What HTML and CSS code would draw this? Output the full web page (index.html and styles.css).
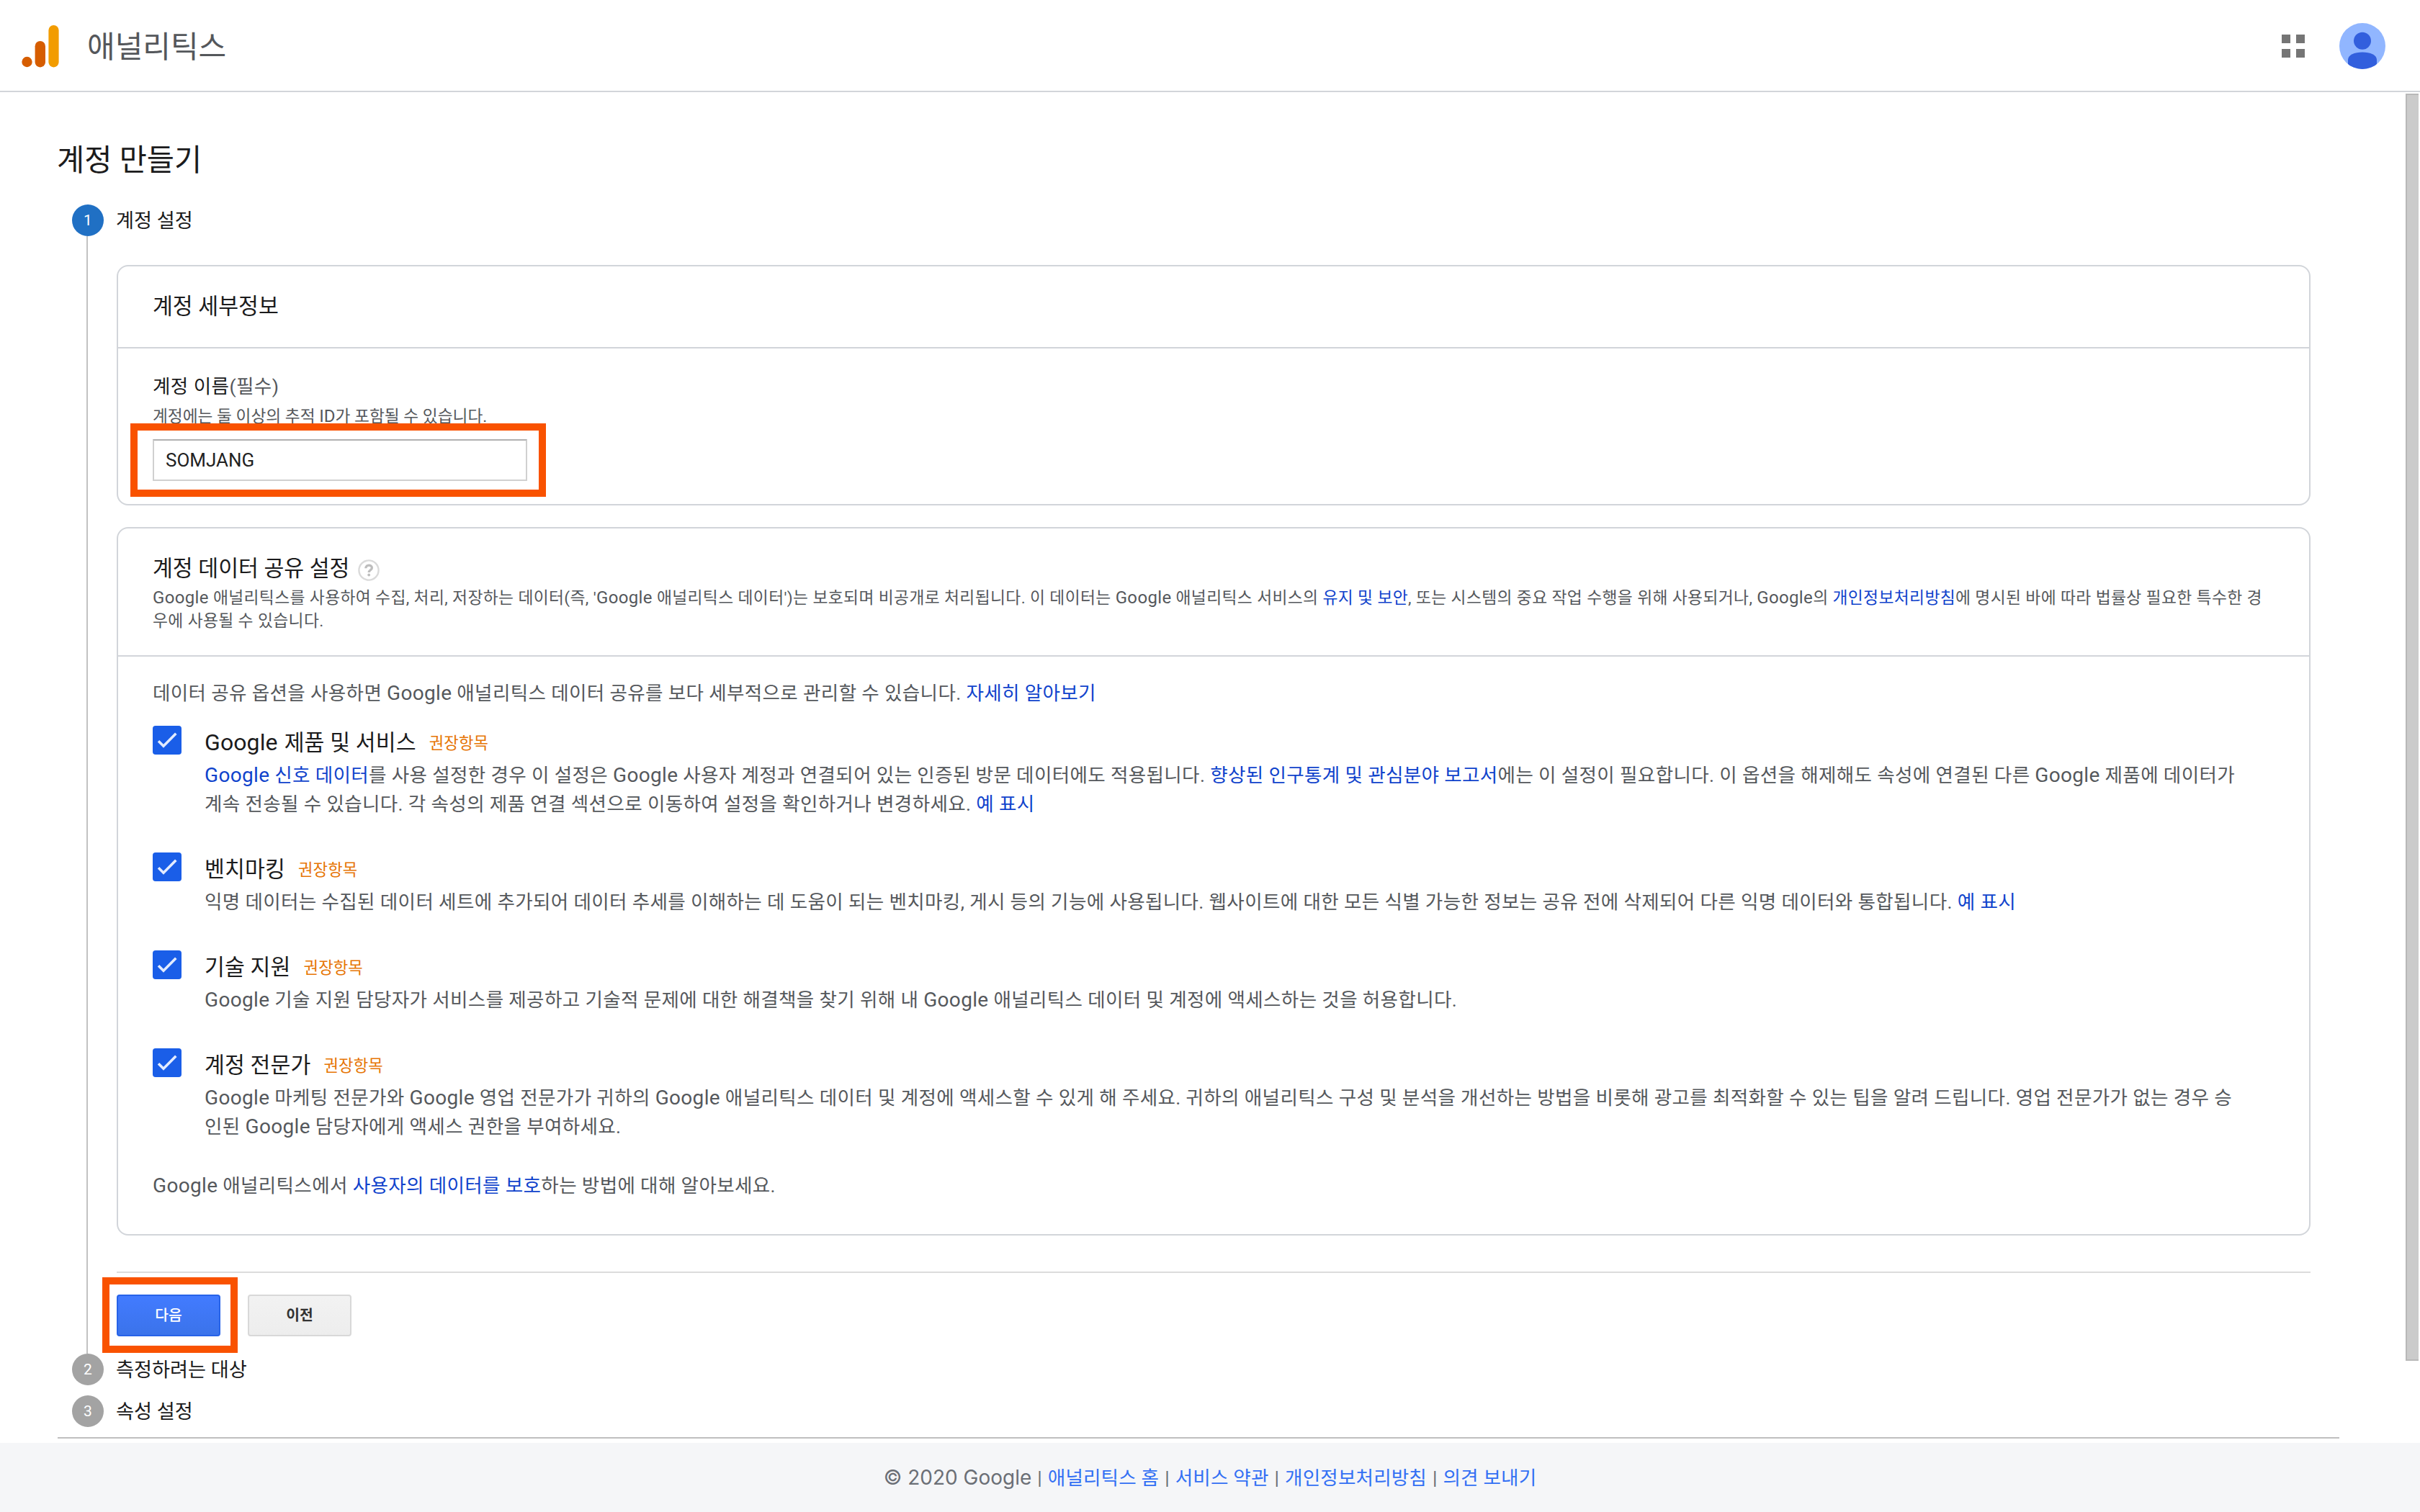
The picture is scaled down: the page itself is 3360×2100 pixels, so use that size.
FILE: index.html
```html
<!DOCTYPE html>
<html lang="ko">
<head>
<meta charset="utf-8">
<title>애널리틱스</title>
<link rel="stylesheet" href="styles.css">
</head>
<body>
<header class="topbar">
  <svg class="logo" width="52" height="60" viewBox="0 0 52 60"><circle cx="7.5" cy="52" r="7.2" fill="#d65d00"/><rect x="18.6" y="23" width="14.4" height="36.4" rx="7.2" fill="#d65d00"/><rect x="37.4" y="1" width="14.2" height="58.4" rx="7.1" fill="#f29c00"/></svg>
  <span class="product">애널리틱스</span>
  <svg class="apps" width="32" height="32" viewBox="0 0 32 32" fill="#757575"><path d="M0 0h12v12H0zM20 0h12v12H20zM0 20h12v12H0zM20 20h12v12H20z"/></svg>
  <svg class="avatar" width="64" height="64" viewBox="0 0 64 64"><clipPath id="round"><circle cx="32" cy="32" r="32"/></clipPath><g clip-path="url(#round)"><rect width="64" height="64" fill="#91b6ff"/><circle cx="32" cy="24.7" r="12" fill="#325fdd"/><path d="M12 64V51C12 44.500 21 40.500 32 40.500S52 44.500 52 51V64z" fill="#325fdd"/></g></svg>
</header>
<div class="scrollbar"></div>
<main class="page">
  <h1>계정 만들기</h1>
  <section class="step current">
    <div class="step-head"><span class="num">1</span><span class="step-title">계정 설정</span></div>
    <div class="step-body">
      <section class="card">
        <h2 class="card-title">계정 세부정보</h2>
        <div class="name-field">
          <label>계정 이름<span class="muted">(필수)</span></label>
          <p class="hint">계정에는 둘 이상의 추적 <span class="en">ID</span>가 포함될 수 있습니다.</p>
          <div class="input marked"><span>SOMJANG</span></div>
        </div>
      </section>
      <section class="card">
        <div class="share-head">
          <h2>계정 데이터 공유 설정 <svg class="help" width="30" height="30" viewBox="0 0 30 30"><circle cx="15" cy="15" r="13.600" fill="#fff" stroke="#dadada" stroke-width="2.400"/><path d="M10.800 12.200c0-5.400 8.600-5.400 8.600-.4 0 3-4.200 3-4.200 6.200" fill="none" stroke="#bdbdbd" stroke-width="3.300"/><circle cx="15.200" cy="21.500" r="1.900" fill="#bdbdbd"/></svg></h2>
          <p class="small"><span class="en">Google</span> 애널리틱스를 사용하여 수집, 처리, 저장하는 데이터(즉, '<span class="en">Google</span> 애널리틱스 데이터')는 보호되며 비공개로 처리됩니다. 이 데이터는 <span class="en">Google</span> 애널리틱스 서비스의 <a>유지 및 보안</a>, 또는 시스템의 중요 작업 수행을 위해 사용되거나, <span class="en">Google</span>의 <a>개인정보처리방침</a>에 명시된 바에 따라 법률상 필요한 특수한 경<br>우에 사용될 수 있습니다.</p>
        </div>
        <div class="share-body">
          <p class="text">데이터 공유 옵션을 사용하면 <span class="en">Google</span> 애널리틱스 데이터 공유를 보다 세부적으로 관리할 수 있습니다. <a>자세히 알아보기</a></p>
          <div class="option">
            <svg class="check" width="40" height="40" viewBox="0 0 40 40"><rect width="40" height="40" rx="4" fill="#1a5ee8"/><path d="M8 21.200l7 7L32.300 10.800" fill="none" stroke="#e3ecff" stroke-width="3.600"/></svg>
            <div><h3><span class="en">Google</span> 제품 및 서비스<em>권장항목</em></h3>
            <p class="text"><a><span class="en">Google</span> 신호 데이터</a>를 사용 설정한 경우 이 설정은 <span class="en">Google</span> 사용자 계정과 연결되어 있는 인증된 방문 데이터에도 적용됩니다. <a>향상된 인구통계 및 관심분야 보고서</a>에는 이 설정이 필요합니다. 이 옵션을 해제해도 속성에 연결된 다른 <span class="en">Google</span> 제품에 데이터가<br>계속 전송될 수 있습니다. 각 속성의 제품 연결 섹션으로 이동하여 설정을 확인하거나 변경하세요. <a>예 표시</a></p></div>
          </div>
          <div class="option">
            <svg class="check" width="40" height="40" viewBox="0 0 40 40"><rect width="40" height="40" rx="4" fill="#1a5ee8"/><path d="M8 21.200l7 7L32.300 10.800" fill="none" stroke="#e3ecff" stroke-width="3.600"/></svg>
            <div><h3>벤치마킹<em>권장항목</em></h3>
            <p class="text">익명 데이터는 수집된 데이터 세트에 추가되어 데이터 추세를 이해하는 데 도움이 되는 벤치마킹, 게시 등의 기능에 사용됩니다. 웹사이트에 대한 모든 식별 가능한 정보는 공유 전에 삭제되어 다른 익명 데이터와 통합됩니다. <a>예 표시</a></p></div>
          </div>
          <div class="option">
            <svg class="check" width="40" height="40" viewBox="0 0 40 40"><rect width="40" height="40" rx="4" fill="#1a5ee8"/><path d="M8 21.200l7 7L32.300 10.800" fill="none" stroke="#e3ecff" stroke-width="3.600"/></svg>
            <div><h3>기술 지원<em>권장항목</em></h3>
            <p class="text"><span class="en">Google</span> 기술 지원 담당자가 서비스를 제공하고 기술적 문제에 대한 해결책을 찾기 위해 내 <span class="en">Google</span> 애널리틱스 데이터 및 계정에 액세스하는 것을 허용합니다.</p></div>
          </div>
          <div class="option">
            <svg class="check" width="40" height="40" viewBox="0 0 40 40"><rect width="40" height="40" rx="4" fill="#1a5ee8"/><path d="M8 21.200l7 7L32.300 10.800" fill="none" stroke="#e3ecff" stroke-width="3.600"/></svg>
            <div><h3>계정 전문가<em>권장항목</em></h3>
            <p class="text"><span class="en">Google</span> 마케팅 전문가와 <span class="en">Google</span> 영업 전문가가 귀하의 <span class="en">Google</span> 애널리틱스 데이터 및 계정에 액세스할 수 있게 해 주세요. 귀하의 애널리틱스 구성 및 분석을 개선하는 방법을 비롯해 광고를 최적화할 수 있는 팁을 알려 드립니다. 영업 전문가가 없는 경우 승<br>인된 <span class="en">Google</span> 담당자에게 액세스 권한을 부여하세요.</p></div>
          </div>
          <p class="text learn"><span class="en">Google</span> 애널리틱스에서 <a>사용자의 데이터를 보호</a>하는 방법에 대해 알아보세요.</p>
        </div>
      </section>
      <div class="actions">
        <div class="button primary marked">다음</div>
        <div class="button">이전</div>
      </div>
    </div>
  </section>
  <section class="step"><div class="step-head"><span class="num">2</span><span class="step-title">측정하려는 대상</span></div></section>
  <section class="step"><div class="step-head"><span class="num">3</span><span class="step-title">속성 설정</span></div></section>
</main>
<footer class="footer"><span class="copy">© 2020 Google</span><i>|</i><a>애널리틱스 홈</a><i>|</i><a>서비스 약관</a><i>|</i><a>개인정보처리방침</a><i>|</i><a>의견 보내기</a></footer>
</body>
</html>
```
FILE: styles.css
```css
*, *::after { box-sizing: border-box; margin: 0; padding: 0; }
body {
  width: 3360px; height: 2100px; overflow: hidden;
  display: flex; flex-direction: column;
  background: #fff; color: #1b1b1c; white-space: nowrap;
  font-family: Roboto, "Noto Sans CJK KR", sans-serif;
}
h1, h2, h3 { font-weight: 400; }
a { color: #1043cc; }
.topbar {
  height: 128px; border-bottom: 2px solid #d2d5da;
  display: flex; align-items: center; padding: 0 48px 0 30px;
}
.logo { margin-top: 2px; }
.product { font-size: 42px; margin-left: 39px; padding-bottom: 4px; color: #54575b; }
.apps { margin: 2px 0 0 auto; }
.avatar { margin: 2px 0 0 48px; }
.scrollbar {
  position: absolute; left: 3340px; top: 130px; width: 18px; height: 1760px;
  background: #cbcbcb; border: 2px solid #b8b8b8; border-right: 0;
}
.page { height: 1876px; padding: 60px 0 0 80px; }
h1 { font-size: 41.5px; line-height: 70px; height: 96px; margin-left: -1px; }
.step { padding-left: 20px; width: 3168px; height: 58px; }
.step:last-child { height: 60px; border-bottom: 2px solid #bfbfbf; }
.step.current { height: 1596px; }
.step-head { height: 44px; display: flex; align-items: center; }
.num {
  width: 44px; height: 44px; border-radius: 50%; background: #a3a3a3; color: #fff;
  font-size: 21px; line-height: 44px; text-align: center; margin-right: 17px;
}
.current .num { background: #2070c4; }
.step-title { font-size: 27.2px; padding-bottom: 4px; }
.step-body {
  margin: 0 20px; border-left: 2px solid #c2c2c2;
  height: 1552px; padding: 40px 0 0 40px; width: 3088px;
}
.card { border: 2px solid #d2d5da; border-radius: 16px; margin-bottom: 30px; }
.card-title { font-size: 30.3px; line-height: 111px; height: 114px; padding-left: 48px; border-bottom: 2px solid #d2d5da; }
.name-field { height: 216px; padding: 33px 0 0 48px; }
label { display: block; font-size: 26.6px; line-height: 40px; letter-spacing: .4px; }
.muted, .text, .small, .hint { color: #55585c; }
.hint { font-size: 22.7px; line-height: 32px; padding-top: 6px; height: 53px; }
.hint .en, .small .en { font-size: 24px; }
.en { line-height: 1; }
.input {
  width: 520px; height: 58px; border: 2px solid #d0d0d0; border-top-color: #b0b0b0;
  font-size: 26px; line-height: 55px; padding-left: 16px; color: #222;
}
.marked { position: relative; }
.marked::after { content: ""; position: absolute; border: 10px solid #f95200; }
.input.marked::after { left: -33px; top: -24px; width: 577px; height: 102px; }
.share-head { height: 178px; padding: 32px 0 0 48px; border-bottom: 2px solid #d2d5da; }
.share-head h2 { font-size: 30.3px; line-height: 46px; height: 48px; display: flex; align-items: center; gap: 12px; }
.help { margin-top: 3px; }
.small { font-size: 22.8px; line-height: 32px; letter-spacing: .35px; padding-top: 1px; }
.share-body { height: 802px; padding: 31px 0 0 48px; display: flex; flex-direction: column; }
.text { font-size: 26.6px; line-height: 40px; letter-spacing: .32px; }
.text .en { font-size: 28px; }
.share-body > .text:first-child { height: 65px; }
.option { display: flex; gap: 32px; margin-bottom: 47px; }
.check { flex: none; }
h3 { font-size: 30.3px; line-height: 46px; padding-top: 1px; height: 49px; display: flex; align-items: baseline; letter-spacing: .1px; }
h3 .en { font-size: 32px; margin-right: 9px; }
em { font-style: normal; font-size: 22.3px; color: #e67505; margin-left: 18px; padding-bottom: 2px; align-self: center; line-height: 42px; }
.learn { margin-top: -5px; }
.actions { height: 90px; margin-top: 50px; border-top: 2px solid #dcdcdc; padding-top: 30px; display: flex; gap: 38px; }
.button {
  width: 144px; height: 58px; border: 2px solid #d8d8d8; border-radius: 4px;
  background: linear-gradient(#f2f2f2, #ededed); color: #333;
  font-size: 20.4px; font-weight: 700; line-height: 54px; text-align: center;
}
.primary { background: linear-gradient(#427bff, #3b73ea); border-color: #2763e8; color: #fff; font-weight: 500; }
.button.marked::after { left: -22px; top: -26px; width: 188px; height: 105px; }
.footer { height: 96px; background: #f5f6f8; color: #6b6f76; font-size: 26.6px; line-height: 97px; text-align: center; }
.footer a { color: #3370f4; letter-spacing: .15px; }
.footer i { font-style: normal; padding: 0 8px; }
.copy { font-family: Inter, sans-serif; font-size: 28px; line-height: 1; }
```
